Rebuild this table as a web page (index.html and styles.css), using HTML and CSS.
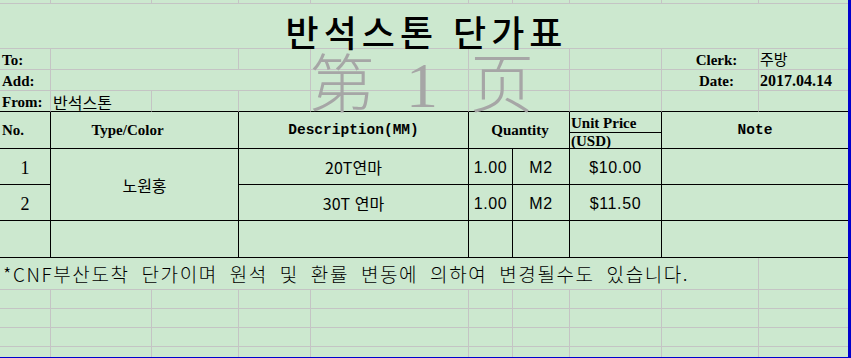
FILE: index.html
```html
<!DOCTYPE html>
<html lang="ko">
<head>
<meta charset="utf-8">
<title>반석스톤 단가표</title>
<link rel="stylesheet" href="styles.css">
</head>
<body>
<div class="sheet">
  <div class="c"></div><div class="c"></div><div class="c"></div><div class="c"></div><div class="c"></div>
  <div class="c"></div><div class="c"></div><div class="c"></div><div class="c"></div><div class="c e"></div>

  <div class="c s10 e title">반석스톤 단가표</div>

  <div class="c lb">To:</div>
  <div class="c s2"></div>
  <div class="c"></div>
  <div class="c"></div>
  <div class="c s2"></div>
  <div class="c"></div>
  <div class="c lbr">Clerk:</div>
  <div class="c e kv">주방</div>

  <div class="c lb">Add:</div>
  <div class="c s3"></div>
  <div class="c"></div>
  <div class="c s2"></div>
  <div class="c"></div>
  <div class="c lbr">Date:</div>
  <div class="c e dv">2017.04.14</div>

  <div class="c bb lb">From:</div>
  <div class="c bb kf">반석스톤</div>
  <div class="c bb"></div>
  <div class="c bb"></div>
  <div class="c bb"></div>
  <div class="c bb s2"></div>
  <div class="c bb"></div>
  <div class="c bb"></div>
  <div class="c bb e"></div>

  <div class="c t hs">No.</div>
  <div class="c t s2 hs tc">Type/Color</div>
  <div class="c t s2 hm ctr">Description(MM)</div>
  <div class="c t s2 hs ctr">Quantity</div>
  <div class="c t up"><div class="up1">Unit Price</div><div class="up2">(USD)</div></div>
  <div class="c t s2 e hm ctr">Note</div>

  <div class="c t num">1</div>
  <div class="c t s2 r2 kr ctr">노원홍</div>
  <div class="c t s2 kr ctr">20T연마</div>
  <div class="c t sn">1.00</div>
  <div class="c t sn">M2</div>
  <div class="c t sn">$10.00</div>
  <div class="c t s2 e"></div>

  <div class="c t num">2</div>
  <div class="c t s2 kr ctr">30T 연마</div>
  <div class="c t sn">1.00</div>
  <div class="c t sn">M2</div>
  <div class="c t sn">$11.50</div>
  <div class="c t s2 e"></div>

  <div class="c t"></div>
  <div class="c t s2"></div>
  <div class="c t s2"></div>
  <div class="c t"></div>
  <div class="c t"></div>
  <div class="c t"></div>
  <div class="c t s2 e"></div>

  <div class="c s9 foot">*CNF부산도착 단가이며 원석 및 환률 변동에 의하여 변경될수도 있습니다.</div>
  <div class="c e"></div>

  <div class="c"></div><div class="c"></div><div class="c"></div><div class="c"></div><div class="c"></div>
  <div class="c"></div><div class="c"></div><div class="c"></div><div class="c"></div><div class="c e"></div>

  <div class="c"></div><div class="c"></div><div class="c"></div><div class="c"></div><div class="c"></div>
  <div class="c"></div><div class="c"></div><div class="c"></div><div class="c"></div><div class="c e"></div>

  <div class="c"></div><div class="c"></div><div class="c"></div><div class="c"></div><div class="c"></div>
  <div class="c"></div><div class="c"></div><div class="c"></div><div class="c"></div><div class="c e"></div>

  <div class="c nb"></div><div class="c nb"></div><div class="c nb"></div><div class="c nb"></div><div class="c nb"></div>
  <div class="c nb"></div><div class="c nb"></div><div class="c nb"></div><div class="c nb"></div><div class="c nb e"></div>

  <div class="wm"><span class="wm-cjk">第</span><span class="wm-one">1</span><span class="wm-cjk">页</span></div>
</div>
</body>
</html>
```
FILE: styles.css
```css
* { box-sizing: border-box; margin: 0; padding: 0; }
html, body { background: #cce8cf; }
body { width: 851px; height: 358px; overflow: hidden; }

.sheet {
  position: relative;
  width: 851px;
  height: 358px;
  border-right: 3px solid #0000cd;
  border-bottom: 1px solid #0000cd;
  display: grid;
  grid-template-columns: 51px 101px 87px 72px 158px 44px 57px 92px 97px 89px;
  grid-template-rows: 4px 45px 21px 21px 21px 37px 36px 36px 37px 32px 19px 19px 19px 10px;
  font-family: "Noto Sans CJK KR", sans-serif;
  color: #000;
}

.c {
  border-right: 1px solid #c4c4c4;
  border-bottom: 1px solid #c4c4c4;
  display: flex;
  align-items: center;
  min-width: 0;
  white-space: nowrap;
}
.e { border-right: 0; }
.nb { border-bottom: 0; }
.bb { border-bottom-color: #000; }
.t { border-right-color: #000; border-bottom-color: #000; }
.s2 { grid-column: span 2; }
.s3 { grid-column: span 3; }
.s9 { grid-column: span 9; }
.s10 { grid-column: span 10; }
.r2 { grid-row: span 2; }
.ctr { justify-content: center; }

.title {
  justify-content: center;
  align-items: flex-start;
  padding-top: 9px;
  padding-left: 5px;
  font-size: 36px;
  line-height: 36px;
  font-weight: 500;
  letter-spacing: 5px;
}

.lb, .lbr, .hs, .up1, .up2 {
  font-family: "Liberation Serif", serif;
  font-weight: bold;
  font-size: 15px;
  line-height: 17px;
}
.lb { align-items: flex-end; padding-left: 2px; }
.lbr { align-items: flex-end; justify-content: center; padding-left: 13px; }
.kv {
  align-items: flex-end;
  padding-left: 1px;
  padding-bottom: 2px;
  font-size: 15px;
  line-height: 17px;
}
.dv {
  align-items: flex-end;
  padding-left: 1px;
  font-family: "Liberation Serif", serif;
  font-weight: bold;
  font-size: 16px;
  line-height: 18px;
}
.kf {
  align-items: flex-end;
  padding-left: 2px;
  font-size: 16px;
  line-height: 18px;
}

.hs { padding-left: 2px; }
.tc { justify-content: center; padding-right: 34px; padding-left: 0; }
.hm {
  font-family: "Liberation Mono", monospace;
  font-weight: bold;
  font-size: 14.5px;
  line-height: 17px;
}

.up { flex-direction: column; align-items: stretch; }
.up1 {
  height: 21px;
  flex: none;
  border-bottom: 1px solid #000;
  display: flex;
  align-items: flex-end;
  padding-left: 1px;
}
.up2 {
  flex: 1;
  padding-left: 1px;
  overflow: hidden;
}

.num {
  justify-content: center;
  padding-top: 2px;
  font-family: "Liberation Serif", serif;
  font-size: 18px;
  line-height: 20px;
}
.kr { font-size: 16px; line-height: 18px; }
.sn {
  justify-content: center;
  padding-top: 2px;
  font-family: "Liberation Sans", sans-serif;
  font-size: 16px;
  line-height: 18px;
  letter-spacing: 0.6px;
}

.foot {
  padding-left: 3px;
  font-size: 19px;
  line-height: 22px;
  font-weight: 300;
  letter-spacing: 1.6px;
  word-spacing: 5px;
}

.wm {
  position: absolute;
  left: 310px;
  top: 57px;
  display: flex;
  align-items: baseline;
  color: #a6a6a6;
  font-size: 64px;
  line-height: 44px;
  pointer-events: none;
}
.wm-cjk { font-family: "Noto Sans CJK SC", sans-serif; font-weight: 300; width: 64px; }
.wm-one { font-family: "Liberation Serif", serif; width: 32px; margin: 0 32px; text-align: center; }
```
